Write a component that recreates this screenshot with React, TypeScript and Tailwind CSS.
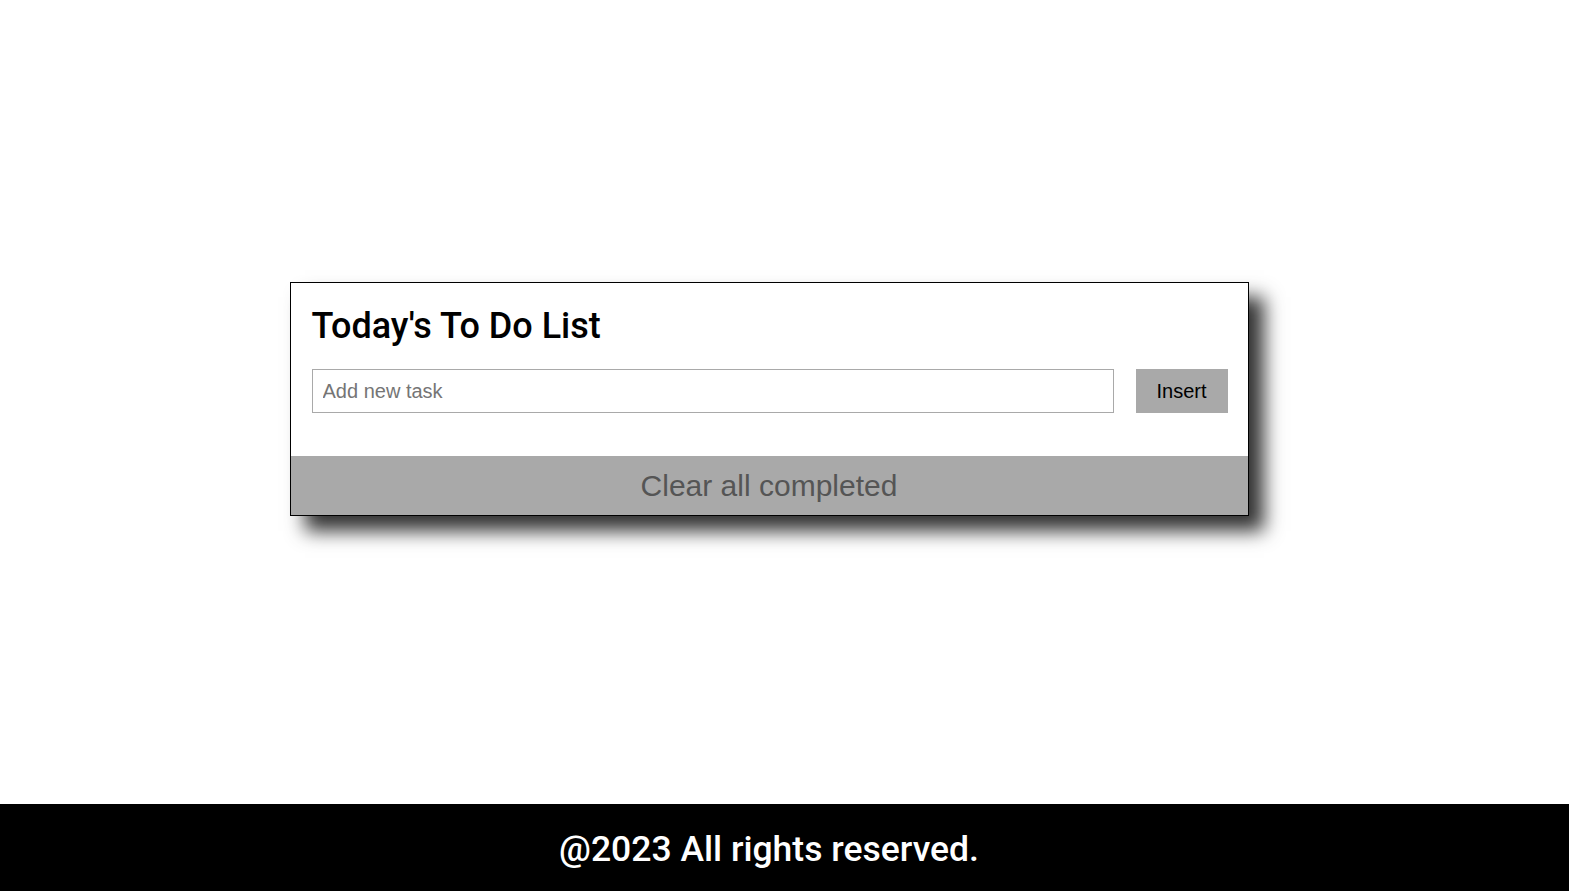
export default function App() {
  return (
    <div className="flex h-[891px] w-full flex-col bg-white">
      <main className="flex flex-1 items-center justify-center pr-[31px]">
        <div className="mb-[6px] w-[959px] border border-black bg-white shadow-[15px_15px_18px_rgba(0,0,0,0.8)]">
          <div className="pl-[21px] pr-[20px] pt-[22px] pb-[43px]">
            <h1 className="text-[36px] font-medium leading-[42px] text-black" style={{ fontFamily: 'Roboto, sans-serif' }}>
              Today's To Do List
            </h1>
            <div className="mt-[22px] flex items-center gap-[22px]">
              <input
                type="text"
                placeholder="Add new task"
                className="h-[44px] flex-1 border border-[#a9a9a9] px-[10px] text-[20px] text-black outline-none placeholder:text-[#757575]"
                style={{ fontFamily: '"Liberation Sans", Arial, sans-serif' }}
              />
              <button
                className="h-[44px] w-[92px] bg-[#a9a9a9] text-[20px] text-black"
                style={{ fontFamily: '"Liberation Sans", Arial, sans-serif' }}
              >
                Insert
              </button>
            </div>
          </div>
          <button
            className="flex h-[59px] w-full items-center justify-center bg-[#a9a9a9] text-[30px] text-[#555555]"
            style={{ fontFamily: '"Liberation Sans", Arial, sans-serif' }}
          >
            Clear all completed
          </button>
        </div>
      </main>
      <footer className="flex h-[87px] items-center justify-center bg-black pr-[31px] pt-[5px]">
        <p className="text-[35.5px] font-medium text-white" style={{ fontFamily: 'Roboto, sans-serif' }}>
          @2023 All rights reserved.
        </p>
      </footer>
    </div>
  );
}
